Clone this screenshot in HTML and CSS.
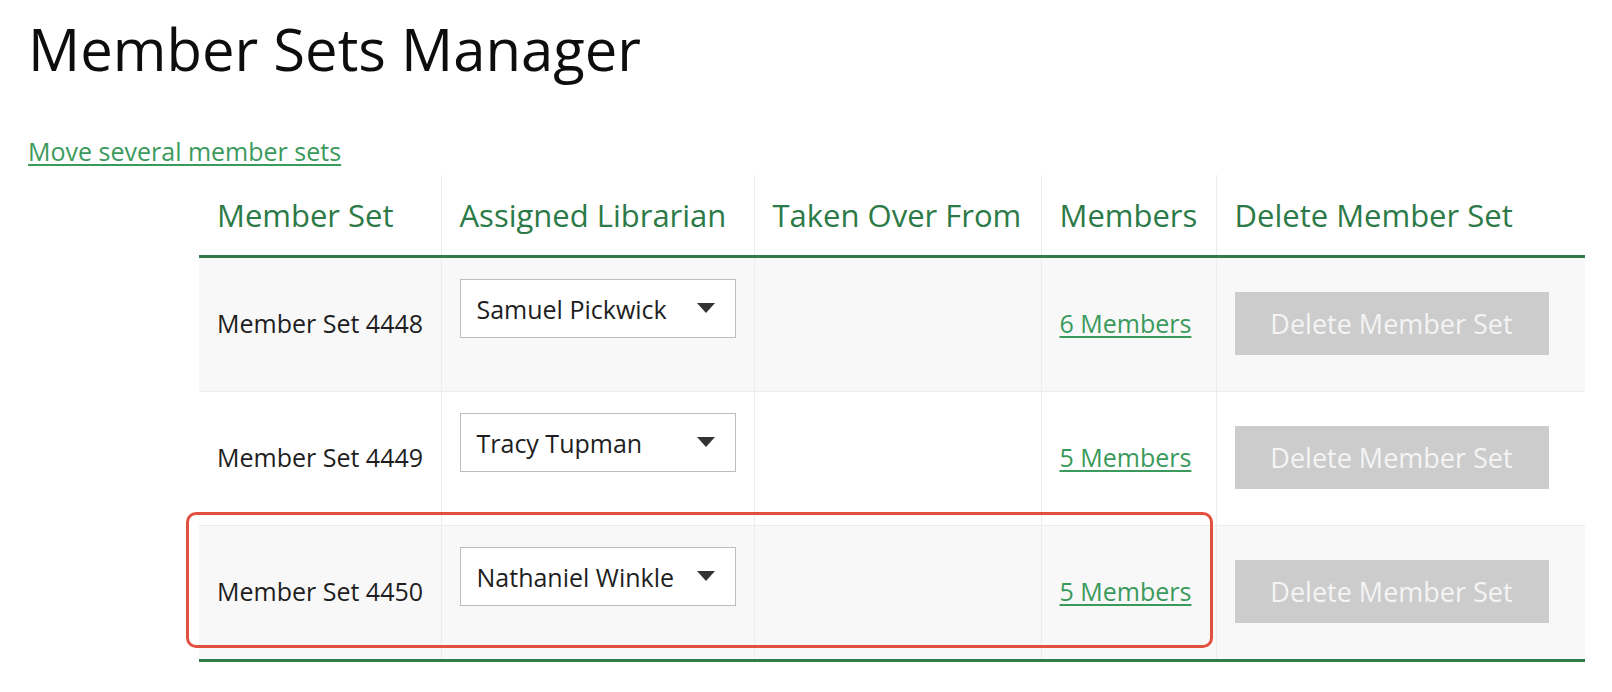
FILE: index.html
```html
<!DOCTYPE html>
<html lang="en">
<head>
<meta charset="utf-8">
<title>Member Sets Manager</title>
<link rel="stylesheet" href="styles.css">
</head>
<body>
<main class="page">
  <h1 class="title">Member Sets Manager</h1>
  <a class="move-link" href="#">Move several member sets</a>
  <div class="table-wrap">
    <table class="sets">
      <colgroup>
        <col class="c-set"><col class="c-lib"><col class="c-taken"><col class="c-members"><col class="c-delete">
      </colgroup>
      <thead>
        <tr>
          <th>Member Set</th>
          <th>Assigned Librarian</th>
          <th>Taken Over From</th>
          <th>Members</th>
          <th>Delete Member Set</th>
        </tr>
      </thead>
      <tbody>
        <tr class="shaded">
          <td>Member Set 4448</td>
          <td class="lib"><div class="select"><span>Samuel Pickwick</span><svg class="caret" viewBox="0 0 18 10" width="18" height="10"><path d="M0 0H18L9 10Z"/></svg></div></td>
          <td></td>
          <td><a class="members" href="#">6 Members</a></td>
          <td><button class="del" type="button" disabled>Delete Member Set</button></td>
        </tr>
        <tr>
          <td>Member Set 4449</td>
          <td class="lib"><div class="select"><span>Tracy Tupman</span><svg class="caret" viewBox="0 0 18 10" width="18" height="10"><path d="M0 0H18L9 10Z"/></svg></div></td>
          <td></td>
          <td><a class="members" href="#">5 Members</a></td>
          <td><button class="del" type="button" disabled>Delete Member Set</button></td>
        </tr>
        <tr class="shaded last">
          <td>Member Set 4450</td>
          <td class="lib"><div class="select"><span>Nathaniel Winkle</span><svg class="caret" viewBox="0 0 18 10" width="18" height="10"><path d="M0 0H18L9 10Z"/></svg></div></td>
          <td></td>
          <td><a class="members" href="#">5 Members</a></td>
          <td><button class="del" type="button" disabled>Delete Member Set</button></td>
        </tr>
      </tbody>
    </table>
    <div class="highlight"></div>
  </div>
</main>
</body>
</html>
```
FILE: styles.css
```css
html, body {
  margin: 0;
  padding: 0;
  background: #ffffff;
}
body {
  font-family: "Open Sans", "Noto Sans", "DejaVu Sans", sans-serif;
  color: #1a1a1a;
}
.page {
  padding: 14px 0 0 28px;
}
.title {
  margin: 0;
  font-size: 58px;
  font-weight: 400;
  line-height: 70px;
  color: #0d0d0d;
}
.move-link {
  display: block;
  margin-top: 52px;
  font-size: 25px;
  line-height: 30px;
  color: #3a9a5c;
  text-decoration: underline;
  text-underline-offset: 3px;
  width: max-content;
}
.table-wrap {
  position: relative;
  margin: 9px 0 0 171px;
  width: 1386px;
}
.sets {
  width: 1386px;
  table-layout: fixed;
  border-collapse: collapse;
}
.c-set { width: 242px; }
.c-lib { width: 313px; }
.c-taken { width: 287px; }
.c-members { width: 175px; }
.c-delete { width: 369px; }
.sets th {
  height: 80px;
  padding: 0 0 0 18px;
  text-align: left;
  font-weight: 400;
  font-size: 31px;
  color: #2c7a47;
  border-bottom: 3px solid #2f7d44;
  border-left: 1px solid #ececec;
  vertical-align: middle;
  white-space: nowrap;
}
.sets th:first-child,
.sets td:first-child {
  border-left: none;
}
.sets td {
  height: 130px;
  padding: 0 0 3px 18px;
  font-size: 25px;
  color: #1e1e1e;
  border-left: 1px solid #ececec;
  border-bottom: 1px solid #ececec;
  vertical-align: middle;
  white-space: nowrap;
}
.sets tr.shaded td {
  background: #f8f8f8;
}
.sets tr.last td {
  border-bottom: 3px solid #2f7d44;
}
.sets td.lib {
  vertical-align: top;
}
.select {
  box-sizing: border-box;
  width: 276px;
  height: 59px;
  margin-top: 21px;
  background: #ffffff;
  border: 1px solid #bdbdbd;
  display: flex;
  align-items: center;
  justify-content: space-between;
  padding: 0 20px 0 16px;
  font-size: 25px;
  color: #1e1e1e;
}
.caret {
  fill: #333333;
  margin-top: -2px;
}
.members {
  color: #3a9a5c;
  text-decoration: underline;
  text-underline-offset: 3px;
  font-size: 25px;
}
.del {
  box-sizing: border-box;
  width: 314px;
  height: 63px;
  border: none;
  background: #cccccc;
  color: #f4f4f4;
  font-family: "Open Sans", "Noto Sans", "DejaVu Sans", sans-serif;
  font-size: 27px;
  padding: 0;
  cursor: default;
}
.highlight {
  position: absolute;
  left: -13px;
  top: 337px;
  width: 1027px;
  height: 136px;
  box-sizing: border-box;
  border: 3px solid #e2503f;
  border-radius: 10px;
  pointer-events: none;
}
```
